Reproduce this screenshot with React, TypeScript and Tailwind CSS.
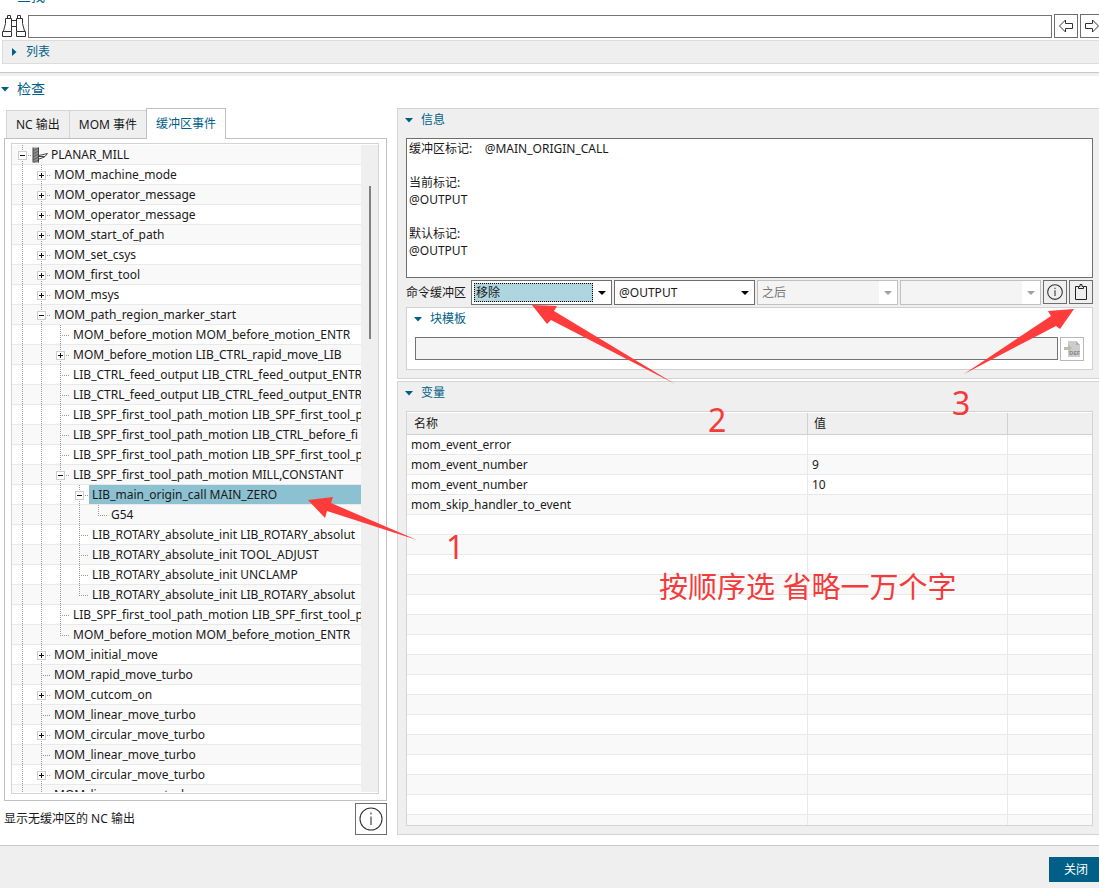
import { ReactNode, useState } from 'react';

type Guide = 'line' | 'none' | 'mid' | 'last' | 'plus' | 'minus';

interface TreeRow {
    level: number;
    label: string;
    box?: 'plus' | 'minus';
    last?: boolean;
    selected?: boolean;
}

const treeRows: TreeRow[] = [
    { level: 0, label: 'PLANAR_MILL', box: 'minus' },
    { level: 1, label: 'MOM_machine_mode', box: 'plus' },
    { level: 1, label: 'MOM_operator_message', box: 'plus' },
    { level: 1, label: 'MOM_operator_message', box: 'plus' },
    { level: 1, label: 'MOM_start_of_path', box: 'plus' },
    { level: 1, label: 'MOM_set_csys', box: 'plus' },
    { level: 1, label: 'MOM_first_tool', box: 'plus' },
    { level: 1, label: 'MOM_msys', box: 'plus' },
    { level: 1, label: 'MOM_path_region_marker_start', box: 'minus' },
    { level: 2, label: 'MOM_before_motion MOM_before_motion_ENTR' },
    { level: 2, label: 'MOM_before_motion LIB_CTRL_rapid_move_LIB', box: 'plus' },
    { level: 2, label: 'LIB_CTRL_feed_output LIB_CTRL_feed_output_ENTR' },
    { level: 2, label: 'LIB_CTRL_feed_output LIB_CTRL_feed_output_ENTR' },
    { level: 2, label: 'LIB_SPF_first_tool_path_motion LIB_SPF_first_tool_p' },
    { level: 2, label: 'LIB_SPF_first_tool_path_motion LIB_CTRL_before_fi' },
    { level: 2, label: 'LIB_SPF_first_tool_path_motion LIB_SPF_first_tool_p' },
    { level: 2, label: 'LIB_SPF_first_tool_path_motion MILL,CONSTANT', box: 'minus' },
    { level: 3, label: 'LIB_main_origin_call MAIN_ZERO', box: 'minus', selected: true },
    { level: 4, label: 'G54', last: true },
    { level: 3, label: 'LIB_ROTARY_absolute_init LIB_ROTARY_absolut' },
    { level: 3, label: 'LIB_ROTARY_absolute_init TOOL_ADJUST' },
    { level: 3, label: 'LIB_ROTARY_absolute_init UNCLAMP' },
    { level: 3, label: 'LIB_ROTARY_absolute_init LIB_ROTARY_absolut', last: true },
    { level: 2, label: 'LIB_SPF_first_tool_path_motion LIB_SPF_first_tool_p' },
    { level: 2, label: 'MOM_before_motion MOM_before_motion_ENTR', last: true },
    { level: 1, label: 'MOM_initial_move', box: 'plus' },
    { level: 1, label: 'MOM_rapid_move_turbo' },
    { level: 1, label: 'MOM_cutcom_on', box: 'plus' },
    { level: 1, label: 'MOM_linear_move_turbo' },
    { level: 1, label: 'MOM_circular_move_turbo', box: 'plus' },
    { level: 1, label: 'MOM_linear_move_turbo' },
    { level: 1, label: 'MOM_circular_move_turbo', box: 'plus' },
    { level: 1, label: 'MOM_linear_move_turbo' },
];

const variables = [
    ['mom_event_error', ''],
    ['mom_event_number', '9'],
    ['mom_event_number', '10'],
    ['mom_skip_handler_to_event', ''],
];

function GuideCell({ kind }: { kind: Guide }) {
    const boxed = kind === 'plus' || kind === 'minus';
    return (
        <svg width="19" height="20" viewBox="0 0 19 20" className="shrink-0" shapeRendering="crispEdges">
            {kind !== 'none' && (
                <path d={kind === 'last' ? 'M9.5 0V11' : 'M9.5 0V20'} stroke="#999" strokeDasharray="1 1" />
            )}
            {kind !== 'none' && kind !== 'line' && <path d="M9 10.5H18" stroke="#999" strokeDasharray="1 1" />}
            {boxed && (
                <>
                    <rect x="5.5" y="6.5" width="8" height="8" fill="#fff" stroke="#ccc" />
                    <path d={kind === 'plus' ? 'M7 10.5H12M9.5 8V13' : 'M7 10.5H12'} stroke="#111" />
                </>
            )}
        </svg>
    );
}

function MillIcon() {
    return (
        <svg width="16" height="16" viewBox="0 0 16 16" className="shrink-0">
            <path d="M1 0.5H6.5V15.5H1Z" fill="#8f8f8f" />
            <path d="M1 4L6.5 1M1 7L6.5 4M1 10L6.5 7M1 13L6.5 10M2 15.5L6.5 13" stroke="#5f5f5f" />
            <path d="M1 0.5V15.5M6.5 0.5V15.5" stroke="#444" />
            <path d="M7 8.5L15.5 6.5L13 9.5H7M7 12L12.5 10" fill="none" stroke="#444" />
        </svg>
    );
}

// a level's line keeps running until its last child has been passed
function guidesFor(index: number): Guide[] {
    const row = treeRows[index];
    const cells: Guide[] = [];
    for (let level = 0; level < row.level; level++) {
        let closed = false;
        for (let i = index; i >= 0 && treeRows[i].level >= level; i--) {
            if (treeRows[i].level === level) {
                closed = !!treeRows[i].last;
                break;
            }
        }
        cells.push(closed ? 'none' : 'line');
    }
    cells.push(row.box ?? (row.last ? 'last' : 'mid'));
    return cells;
}

function Tree() {
    return (
        <ul role="tree" className="min-w-0 flex-1 overflow-hidden text-xs">
            {treeRows.map((row, i) => (
                <li
                    key={i}
                    role="treeitem"
                    aria-selected={!!row.selected}
                    className="flex h-5 items-stretch overflow-hidden border-b border-[#e9e9e9] pl-px odd:bg-[#f9f9f9]"
                >
                    {guidesFor(i).map((kind, n) => (
                        <GuideCell key={n} kind={kind} />
                    ))}
                    {row.level === 0 && <span className="flex items-center"><MillIcon /></span>}
                    <span
                        className={
                            row.selected
                                ? 'flex-1 bg-[#8bc1d0] pl-[3px] leading-[19px] whitespace-nowrap'
                                : 'flex-1 pl-[3px] leading-[19px] whitespace-nowrap'
                        }
                    >
                        {row.label}
                    </span>
                </li>
            ))}
        </ul>
    );
}

function Caret({ open = true }: { open?: boolean }) {
    return (
        <svg width="8" height="8" viewBox="0 0 8 8" className="shrink-0" fill="#005f87">
            <path d={open ? 'M0 2H8L4 6.5Z' : 'M2 0V8L6.5 4Z'} />
        </svg>
    );
}

function GroupTitle({ children }: { children: ReactNode }) {
    return (
        <div className="-ml-px flex h-[29px] items-start pt-[3px]">
            <button type="button" className="flex items-center gap-2 text-xs text-[#005f87]">
                <Caret />
                {children}
            </button>
        </div>
    );
}

interface DropDownProps {
    label: string;
    value: string;
    disabled?: boolean;
    focused?: boolean;
}

function DropDown({ label, value, disabled, focused }: DropDownProps) {
    return (
        <div
            className={
                disabled
                    ? 'flex h-[25px] min-w-0 flex-1 items-center border border-[#c0c0c0] bg-white'
                    : 'flex h-[25px] min-w-0 flex-1 items-center border border-[#6e6e6e] bg-white'
            }
        >
            <select
                aria-label={label}
                disabled={disabled}
                className={
                    focused
                        ? 'ml-0.5 h-[19px] min-w-0 flex-1 appearance-none border border-dotted border-black bg-[#afd5de] pl-px text-xs leading-4 outline-none'
                        : 'h-full min-w-0 flex-1 appearance-none pl-1 text-xs outline-none disabled:bg-[#f4f4f4] disabled:text-[#777] disabled:opacity-100'
                }
            >
                <option>{value}</option>
            </select>
            <span className="pointer-events-none flex w-[18px] justify-center">
                <svg width="8" height="4" viewBox="0 0 8 4" fill={disabled ? '#a0a0a0' : '#000'}>
                    <path d="M0 0H8L4 4Z" />
                </svg>
            </span>
        </div>
    );
}

function InfoIcon({ size }: { size: number }) {
    return (
        <svg width={size} height={size} viewBox="0 0 24 24" fill="none" stroke="#333" strokeWidth={26 / size}>
            <circle cx="12" cy="12" r="11" />
            <path d="M12 9.5V18M12 5.5V7.5" />
        </svg>
    );
}

function SearchBar() {
    return (
        <div className="flex gap-0.5">
            <div className="flex flex-1 items-center">
                <svg width="24" height="24" viewBox="0 0 24 24" fill="none" stroke="#333" className="ml-0.5">
                    <path d="M0.5 17.5H9.5V22.5H0.5ZM14.5 17.5H23.5V22.5H14.5Z" />
                    <path d="M1.5 17L3.5 9.5V4.5H9.5V17M22.5 17L20.5 9.5V4.5H14.5V17" />
                    <path d="M5.5 4V1.5H8.5V4M15.5 4V1.5H18.5V4M9.5 6.5H14.5M9.5 12.5H14.5" />
                </svg>
                <input
                    type="text"
                    aria-label="查找"
                    className="ml-0.5 h-[23px] min-w-0 flex-1 border border-[#737373] bg-white px-1 text-xs outline-none"
                />
            </div>
            <button type="button" aria-label="上一个" className="flex size-6 items-center justify-center border border-[#6e6e6e]">
                <svg width="14" height="14" viewBox="0 0 14 14" fill="none" stroke="#333">
                    <path d="M0.5 7L6.5 1V4.5H13.5V9.5H6.5V13Z" />
                </svg>
            </button>
            <button type="button" aria-label="下一个" className="flex size-6 items-center justify-center border border-[#6e6e6e]">
                <svg width="14" height="14" viewBox="0 0 14 14" fill="none" stroke="#333">
                    <path d="M13.5 7L7.5 1V4.5H0.5V9.5H7.5V13Z" />
                </svg>
            </button>
        </div>
    );
}

function EventPane() {
    const [tab, setTab] = useState(2);
    const tabs = ['NC 输出', 'MOM 事件', '缓冲区事件'];

    return (
        <div className="ml-1 flex w-[383px] shrink-0 flex-col">
            <div role="tablist" className="flex items-end pl-0.5">
                {tabs.map((name, i) => (
                    <button
                        key={name}
                        type="button"
                        role="tab"
                        aria-selected={tab === i}
                        onClick={() => setTab(i)}
                        className={
                            tab === i
                                ? 'relative -mb-px h-[31px] border border-b-0 border-[#c0c0c0] bg-white px-[9px] text-xs text-[#005f87]'
                                : 'h-7 border border-r-0 border-b-0 border-[#d4d4d4] bg-[#efefef] px-[9px] text-xs'
                        }
                    >
                        {name}
                    </button>
                ))}
            </div>
            <div className="flex min-h-0 flex-1 border border-[#c0c0c0] pt-1 pr-[7px] pb-1.5 pl-1.5">
                <div className="flex min-w-0 flex-1 border border-[#d4d4d4] pt-px pb-px">
                    <Tree />
                    <div className="flex w-[17px] justify-center bg-[#efefef] pt-[41px]">
                        <div className="h-[153px] w-0.5 bg-[#808080]" />
                    </div>
                </div>
            </div>
            <div className="mt-0.5 flex items-center justify-between text-xs">
                显示无缓冲区的 NC 输出
                <button type="button" aria-label="信息" className="flex size-8 items-center justify-center border border-[#6e6e6e]">
                    <InfoIcon size={24} />
                </button>
            </div>
        </div>
    );
}

function InfoSection() {
    return (
        <section className="border border-[#d4d4d4] bg-[#efefef] px-2 pb-2">
            <GroupTitle>信息</GroupTitle>
            <textarea
                readOnly
                aria-label="信息"
                value={'缓冲区标记:    @MAIN_ORIGIN_CALL\n\n当前标记:\n@OUTPUT\n\n默认标记:\n@OUTPUT'}
                className="block h-[140px] w-full resize-none border border-[#6e6e6e] bg-white px-0.5 py-px text-xs leading-[17px] outline-none"
            />
            <div className="mt-0.5 flex gap-0.5">
                <span className="mr-[3px] flex items-center text-xs">命令缓冲区</span>
                <DropDown label="命令" value="移除" focused />
                <DropDown label="标记" value="@OUTPUT" />
                <DropDown label="位置" value="之后" disabled />
                <DropDown label="目标" value="" disabled />
                <button type="button" aria-label="信息" className="flex size-6 items-center justify-center border border-[#6e6e6e]">
                    <InfoIcon size={16} />
                </button>
                <button type="button" aria-label="粘贴" className="flex size-6 items-center justify-center border border-[#6e6e6e]">
                    <svg width="12" height="16" viewBox="0 0 12 16" fill="none" stroke="#222">
                        <path d="M3 2.5H0.5V15.5H11.5V2.5H9" />
                        <path d="M3.5 4.5V2.5H5V0.5H7V2.5H8.5V4.5Z" />
                    </svg>
                </button>
            </div>
            <div className="mt-0.5 border border-[#d0d0d0] bg-white px-2 pb-2">
                <GroupTitle>块模板</GroupTitle>
                <div className="flex gap-0.5">
                    <input
                        type="text"
                        readOnly
                        aria-label="块模板"
                        className="h-[23px] min-w-0 flex-1 border border-[#737373] bg-[#f4f4f4] px-1 text-xs outline-none"
                    />
                    <button type="button" aria-label="DEF" className="flex size-6 items-center justify-center border border-[#b8b8b8]">
                        <svg width="16" height="16" viewBox="0 0 16 16">
                            <path d="M4 0H12L16 4V16H4Z" fill="#cdcdd0" />
                            <path d="M12 0V4H16Z" fill="#adadb2" />
                            <path d="M0 6H4V3L8 7L4 11V9H0Z" fill="#bdbdac" />
                            <text x="5" y="14" fontSize="6" fontWeight="700" fill="#858589">DEF</text>
                        </svg>
                    </button>
                </div>
            </div>
        </section>
    );
}

function VariableSection() {
    const rows = Array.from({ length: 20 }, (_, i) => variables[i] ?? ['', '']);
    return (
        <section className="mt-0.5 flex min-h-0 flex-1 flex-col border border-[#d4d4d4] bg-[#efefef] px-2 pb-2">
            <GroupTitle>变量</GroupTitle>
            <div className="min-h-0 flex-1 overflow-hidden border border-[#d4d4d4] bg-white pt-px">
                <table className="w-full table-fixed border-separate border-spacing-0 text-xs">
                    <colgroup>
                        <col className="w-[401px]" />
                        <col className="w-[200px]" />
                        <col />
                    </colgroup>
                    <thead>
                        <tr className="h-[22px] bg-[#efefef] text-left">
                            <th className="border-r border-b border-[#d0d0d0] p-0 pl-[7px] font-normal">名称</th>
                            <th className="border-r border-b border-[#d0d0d0] p-0 pl-1.5 font-normal">值</th>
                            <th className="border-b border-[#d0d0d0] p-0" />
                        </tr>
                    </thead>
                    <tbody>
                        {rows.map(([name, value], i) => (
                            <tr key={i} className="h-5 leading-[19px] even:bg-[#f9f9f9]">
                                <td className="border-r border-b border-[#e9e9e9] p-0 pl-1">{name}</td>
                                <td className="border-r border-b border-[#e9e9e9] p-0 pl-1">{value}</td>
                                <td className="border-b border-[#e9e9e9] p-0" />
                            </tr>
                        ))}
                    </tbody>
                </table>
            </div>
        </section>
    );
}

// red pen marks lying over the window
function Notes() {
    return (
        <div className="pointer-events-none absolute inset-0 text-[32px] leading-8 text-[#f43b3b]">
            <svg width="1099" height="888" viewBox="0 0 1099 888" className="absolute top-0 left-0" fill="#ff3b3b">
                <path d="M308 500L333 497L331 503L417 540L327 511L325 518Z" />
                <path d="M532 305L557 306L554 311L675 384L551 320L547 324Z" />
                <path d="M1074 309L1048 311L1051 316L964 374L1056 326L1060 329Z" />
            </svg>
            <span className="absolute top-[531px] left-[446px]">1</span>
            <span className="absolute top-[404px] left-[708px]">2</span>
            <span className="absolute top-[387px] left-[952px]">3</span>
            <span className="absolute top-[571px] left-[659px] text-[29px] whitespace-nowrap">按顺序选 省略一万个字</span>
        </div>
    );
}

export default function App() {
    return (
        <div className="relative h-screen overflow-hidden bg-white font-['Noto_Sans','Noto_Sans_CJK_SC',sans-serif] text-[#1a1a1a]">
            <div className="-mr-[5px] flex h-full flex-col">
                <div className="mb-2 flex h-1.5 items-end overflow-hidden pl-[17px] text-sm text-[#005f87]">查找</div>
                <SearchBar />
                <button
                    type="button"
                    className="mt-0.5 ml-0.5 flex h-6 items-center gap-2 border border-[#dcdcdc] bg-[#efefef] pl-[7px] text-xs text-[#005f87]"
                >
                    <Caret open={false} />
                    列表
                </button>
                <div className="mt-2 h-1 border-t border-[#c8c8c8] bg-[#efefef]" />
                <button type="button" className="flex h-8 items-center gap-2 pb-1.5 pl-px text-sm text-[#005f87]">
                    <Caret />
                    检查
                </button>
                <main className="mb-2.5 flex min-h-0 flex-1 gap-2.5">
                    <EventPane />
                    <div className="mr-0.5 flex min-w-0 flex-1 flex-col">
                        <InfoSection />
                        <VariableSection />
                    </div>
                </main>
                <footer className="flex h-[43px] items-start justify-end border-t border-[#c8c8c8] bg-[#efefef] pt-[11px]">
                    <button type="button" className="h-[25px] bg-[#005f87] pr-4 pl-[15px] text-xs text-white">
                        关闭
                    </button>
                </footer>
            </div>
            <Notes />
        </div>
    );
}
